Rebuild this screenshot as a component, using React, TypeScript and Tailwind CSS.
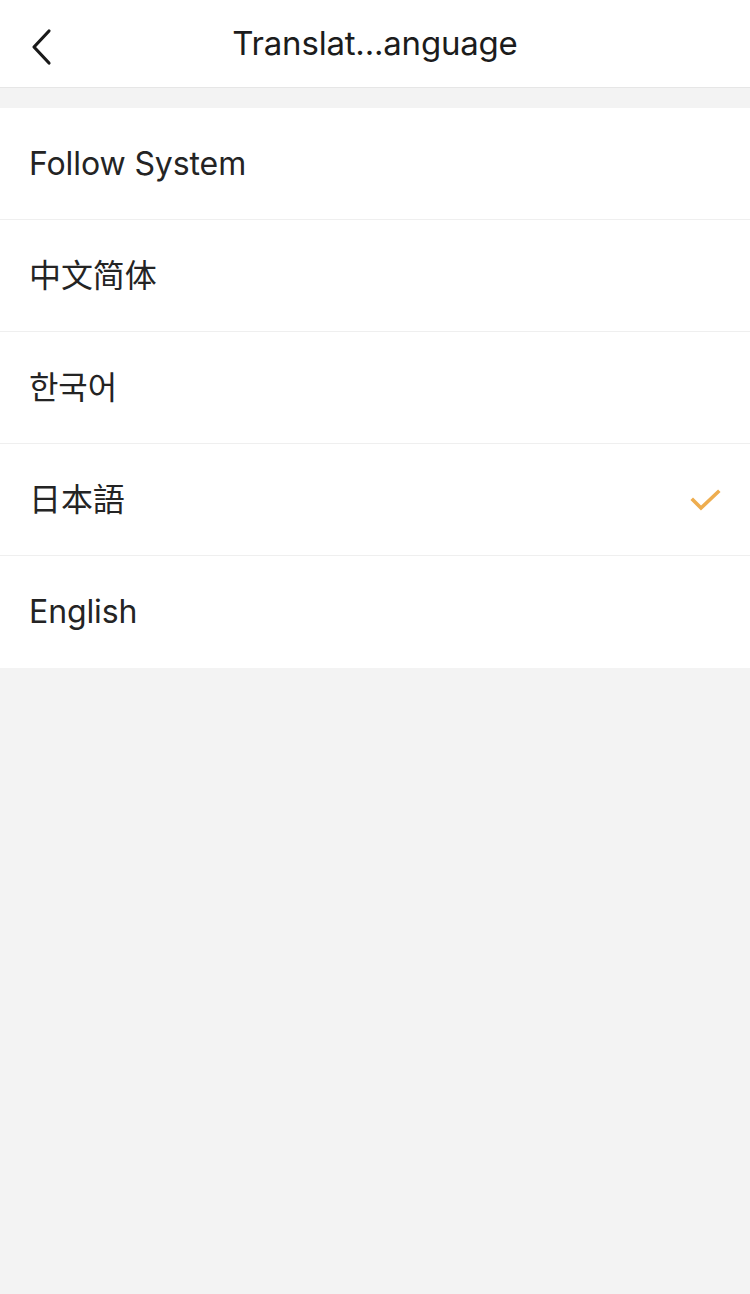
const languages = ['Follow System', '中文简体', '한국어', '日本語', 'English']
const selected = '日本語'

const font = {
  fontFamily: 'Inter, "Noto Sans CJK SC", "Noto Sans CJK KR", "Noto Sans CJK JP", sans-serif',
}

export default function App() {
  return (
    <div className="flex min-h-[1294px] w-[750px] flex-col bg-[#f3f3f3]" style={font}>
      <header className="relative flex h-[88px] items-center justify-center border-b border-[#e6e6e6] bg-white">
        <button type="button" className="absolute left-[26px] top-[24px] p-1 text-[#1a1a1a]" aria-label="Back">
          <svg width="22" height="38" viewBox="0 0 22 38" fill="none">
            <path d="M19 3 L4 19 L19 35" stroke="currentColor" strokeWidth="3.2" strokeLinecap="round" strokeLinejoin="round" />
          </svg>
        </button>
        <h1 className="text-[33px] font-normal tracking-[-0.2px] text-[#1c1c1c]">Translat...anguage</h1>
      </header>

      <ul className="mt-5 bg-white">
        {languages.map((lang, i) => (
          <li
            key={lang}
            className={`flex h-[112px] items-center justify-between pl-[29px] pr-[28px] ${
              i < languages.length - 1 ? 'border-b border-[#efefef]' : ''
            }`}
          >
            <span className="text-[32px] tracking-[-0.1px] text-[#242424]">{lang}</span>
            {lang === selected && (
              <svg width="32" height="24" viewBox="0 0 32 24" fill="none">
                <path d="M3 12 L11 20 L28 4" stroke="#eead4f" strokeWidth="3.6" strokeLinecap="square" />
              </svg>
            )}
          </li>
        ))}
      </ul>
    </div>
  )
}
